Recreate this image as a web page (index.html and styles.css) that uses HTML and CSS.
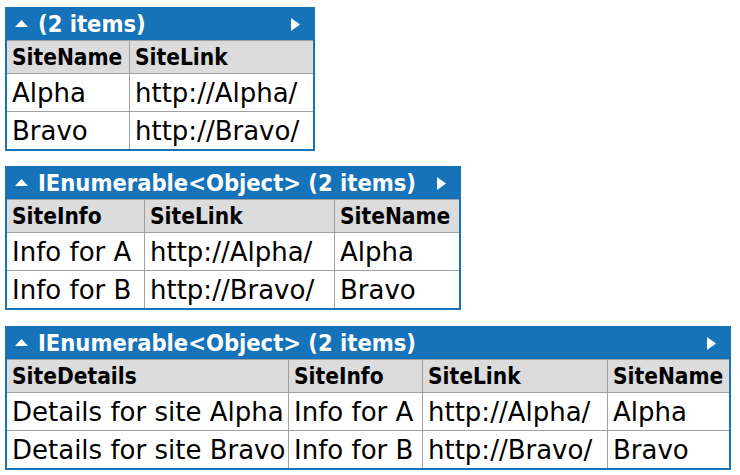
FILE: index.html
```html
<!DOCTYPE html>
<html>
<head>
<meta charset="utf-8">
<link rel="stylesheet" href="styles.css">
</head>
<body>
<div class="stack">
  <table class="dump t1">
    <colgroup><col class="w1-1"><col class="w1-2"></colgroup>
    <thead>
      <tr class="title-row">
        <th colspan="2">
          <div class="title">
            <svg class="up" width="13" height="7" viewBox="0 0 13 7"><polygon points="0,7 13,7 6.5,0" fill="#fff"/></svg>
            <span class="title-text">(2 items)</span>
            <svg class="right" width="9" height="13" viewBox="0 0 9 13"><polygon points="0,0 9,6.5 0,13" fill="#fff"/></svg>
          </div>
        </th>
      </tr>
      <tr class="head-row">
        <th>SiteName</th>
        <th>SiteLink</th>
      </tr>
    </thead>
    <tbody>
      <tr><td>Alpha</td><td>http://Alpha/</td></tr>
      <tr><td>Bravo</td><td>http://Bravo/</td></tr>
    </tbody>
  </table>

  <table class="dump t2">
    <colgroup><col class="w2-1"><col class="w2-2"><col class="w2-3"></colgroup>
    <thead>
      <tr class="title-row">
        <th colspan="3">
          <div class="title">
            <svg class="up" width="13" height="7" viewBox="0 0 13 7"><polygon points="0,7 13,7 6.5,0" fill="#fff"/></svg>
            <span class="title-text">IEnumerable&lt;Object&gt; (2 items)</span>
            <svg class="right" width="9" height="13" viewBox="0 0 9 13"><polygon points="0,0 9,6.5 0,13" fill="#fff"/></svg>
          </div>
        </th>
      </tr>
      <tr class="head-row">
        <th>SiteInfo</th>
        <th>SiteLink</th>
        <th>SiteName</th>
      </tr>
    </thead>
    <tbody>
      <tr><td>Info for A</td><td>http://Alpha/</td><td>Alpha</td></tr>
      <tr><td>Info for B</td><td>http://Bravo/</td><td>Bravo</td></tr>
    </tbody>
  </table>

  <table class="dump t3">
    <colgroup><col class="w3-1"><col class="w3-2"><col class="w3-3"><col class="w3-4"></colgroup>
    <thead>
      <tr class="title-row">
        <th colspan="4">
          <div class="title">
            <svg class="up" width="13" height="7" viewBox="0 0 13 7"><polygon points="0,7 13,7 6.5,0" fill="#fff"/></svg>
            <span class="title-text">IEnumerable&lt;Object&gt; (2 items)</span>
            <svg class="right" width="9" height="13" viewBox="0 0 9 13"><polygon points="0,0 9,6.5 0,13" fill="#fff"/></svg>
          </div>
        </th>
      </tr>
      <tr class="head-row">
        <th>SiteDetails</th>
        <th>SiteInfo</th>
        <th>SiteLink</th>
        <th>SiteName</th>
      </tr>
    </thead>
    <tbody>
      <tr><td>Details for site Alpha</td><td>Info for A</td><td>http://Alpha/</td><td>Alpha</td></tr>
      <tr><td>Details for site Bravo</td><td>Info for B</td><td>http://Bravo/</td><td>Bravo</td></tr>
    </tbody>
  </table>
</div>
</body>
</html>
```
FILE: styles.css
```css
html, body {
  margin: 0;
  padding: 0;
  background: #ffffff;
}
body {
  padding: 7px 0 0 5px;
  font-family: "DejaVu Sans", Verdana, sans-serif;
  color: #000;
}
.stack {
  display: flex;
  flex-direction: column;
  align-items: flex-start;
  gap: 15px;
}
.dump {
  border-collapse: separate;
  border-spacing: 0;
  border: 2px solid #1673b9;
  table-layout: fixed;
}
.t1 { width: 310px; }
.t2 { width: 456px; }
.t3 { width: 726px; margin-top: 1px; }

.title-row th {
  background: #1673b9;
  height: 31px;
  padding: 0;
  box-sizing: border-box;
}
.title {
  display: flex;
  align-items: center;
  height: 31px;
  padding: 0 13px 0 8px;
  color: #fff;
  font-family: "DejaVu Sans Condensed", "DejaVu Sans", sans-serif;
  font-weight: bold;
  font-size: 23.5px;
  text-align: left;
}
.up {
  flex: none;
  margin-right: 10px;
  margin-top: -2px;
}
.title-text {
  flex: 1;
  white-space: nowrap;
  line-height: 31px;
}
.right {
  flex: none;
  margin-top: -1px;
}

.head-row th {
  background: #dcdcdc;
  height: 33px;
  box-sizing: border-box;
  border-top: 1px solid #a0a0a0;
  border-right: 1px solid #a0a0a0;
  padding: 0 2px 0 5px;
  text-align: left;
  font-family: "DejaVu Sans Condensed", "DejaVu Sans", sans-serif;
  font-weight: bold;
  font-size: 22.5px;
  white-space: nowrap;
  overflow: hidden;
  vertical-align: middle;
}
.head-row th:last-child { border-right: none; }

td {
  height: 38px;
  box-sizing: border-box;
  border-top: 1px solid #a0a0a0;
  border-right: 1px solid #a0a0a0;
  padding: 0 0 0 5px;
  font-size: 26px;
  white-space: nowrap;
  overflow: hidden;
  vertical-align: middle;
}
td:last-child { border-right: none; }

.w1-1 { width: 123px; }
.w1-2 { width: 183px; }
.w2-1 { width: 138px; }
.w2-2 { width: 190px; }
.w2-3 { width: 124px; }
.w3-1 { width: 282px; }
.w3-2 { width: 134px; }
.w3-3 { width: 185px; }
.w3-4 { width: 121px; }
```
